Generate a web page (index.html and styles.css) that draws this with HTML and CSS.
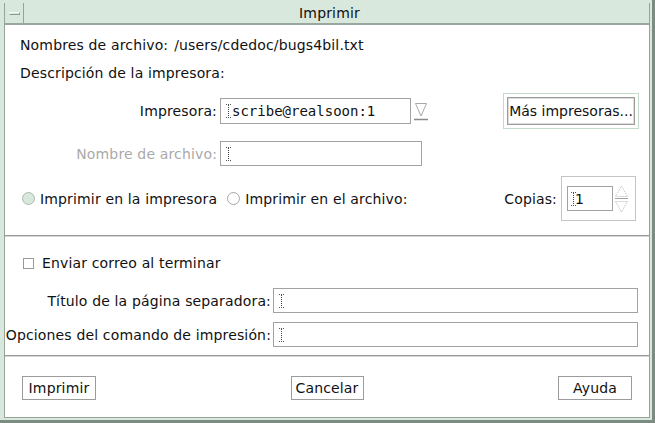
FILE: index.html
```html
<!DOCTYPE html>
<html lang="es">
<head>
<meta charset="utf-8">
<title>Imprimir</title>
<link rel="stylesheet" href="styles.css">
</head>
<body>
<div class="window">
  <div class="frame">
    <div class="titlebar">
      <div class="menu-btn"><span class="menu-bar"></span></div>
      <div class="title">Imprimir</div>
    </div>
    <div class="content">
      <section class="sec sec-top">
        <div class="info">Nombres de archivo:<span class="path">/users/cdedoc/bugs4bil.txt</span></div>
        <div class="info info-desc">Descripción de la impresora:</div>
        <div class="row row-printer">
          <span class="lbl lbl-a">Impresora:</span>
          <div class="field field-printer">
            <svg class="ibeam" width="5" height="14" viewBox="0 0 5 14"><path d="M0 0.5H5M0 13.5H5" stroke="#555" stroke-width="1" stroke-dasharray="1 1"/><path d="M2.5 1V13" stroke="#444" stroke-width="1" stroke-dasharray="1 1"/></svg>
            <span class="mono">scribe@realsoon:1</span>
          </div>
          <svg class="dropdown" width="16" height="22" viewBox="0 0 16 22"><path d="M2.5 3.5H13.5L8 16Z" fill="none" stroke="#a8a8a8" stroke-width="1"/><path d="M1 19.5H15" stroke="#8a8a8a" stroke-width="1.5"/></svg>
          <div class="spacer"></div>
          <div class="btn-frame"><button class="btn btn-more">Más impresoras...</button></div>
        </div>
        <div class="row row-file">
          <span class="lbl lbl-a disabled">Nombre de archivo:</span>
          <div class="field field-file">
            <svg class="ibeam" width="5" height="14" viewBox="0 0 5 14"><path d="M0 0.5H5M0 13.5H5" stroke="#555" stroke-width="1" stroke-dasharray="1 1"/><path d="M2.5 1V13" stroke="#444" stroke-width="1" stroke-dasharray="1 1"/></svg>
          </div>
        </div>
        <div class="row row-radio">
          <span class="radio radio-on"></span>
          <span class="radio-text">Imprimir en la impresora</span>
          <span class="radio"></span>
          <span class="radio-text">Imprimir en el archivo:</span>
          <div class="spacer"></div>
          <span class="copies-lbl">Copias:</span>
          <div class="copies-box">
            <div class="field field-copies">
              <svg class="ibeam" width="5" height="14" viewBox="0 0 5 14"><path d="M0 0.5H5M0 13.5H5" stroke="#555" stroke-width="1" stroke-dasharray="1 1"/><path d="M2.5 1V13" stroke="#444" stroke-width="1" stroke-dasharray="1 1"/></svg>
              <span class="copies-val">1</span>
            </div>
            <svg class="spinner" width="15" height="28" viewBox="0 0 15 28"><path d="M7.5 1L13.5 11.5H1.5Z" fill="none" stroke="#b8b8b8" stroke-width="1" stroke-dasharray="1 1"/><path d="M1 13.5H14" stroke="#a0a0a0" stroke-width="1"/><path d="M1.5 16.5H13.5L7.5 27Z" fill="none" stroke="#b8b8b8" stroke-width="1" stroke-dasharray="1 1"/></svg>
          </div>
        </div>
      </section>
      <div class="sep"></div>
      <section class="sec sec-mid">
        <div class="row row-check">
          <span class="check"></span>
          <span class="check-text">Enviar correo al terminar</span>
        </div>
        <div class="row row-field row-title">
          <span class="lbl lbl-b">Título de la página separadora:</span>
          <div class="field field-wide">
            <svg class="ibeam" width="5" height="14" viewBox="0 0 5 14"><path d="M0 0.5H5M0 13.5H5" stroke="#555" stroke-width="1" stroke-dasharray="1 1"/><path d="M2.5 1V13" stroke="#444" stroke-width="1" stroke-dasharray="1 1"/></svg>
          </div>
        </div>
        <div class="row row-field row-opts">
          <span class="lbl lbl-b">Opciones del comando de impresión:</span>
          <div class="field field-wide">
            <svg class="ibeam" width="5" height="14" viewBox="0 0 5 14"><path d="M0 0.5H5M0 13.5H5" stroke="#555" stroke-width="1" stroke-dasharray="1 1"/><path d="M2.5 1V13" stroke="#444" stroke-width="1" stroke-dasharray="1 1"/></svg>
          </div>
        </div>
      </section>
      <div class="sep"></div>
      <section class="sec sec-bottom">
        <button class="btn btn-act btn-print">Imprimir</button>
        <button class="btn btn-act btn-cancel">Cancelar</button>
        <button class="btn btn-act btn-help">Ayuda</button>
      </section>
    </div>
  </div>
</div>
</body>
</html>
```
FILE: styles.css
```css
* { box-sizing: border-box; }
html, body { margin: 0; padding: 0; }
body {
  width: 655px;
  height: 423px;
  overflow: hidden;
  font-family: "DejaVu Sans", "Liberation Sans", sans-serif;
  font-size: 14px;
  letter-spacing: 0.15px;
  color: #111;
  background: #d8e8dc;
}
.window {
  width: 655px;
  height: 423px;
  display: flex;
  flex-direction: column;
  background: #d8e8dc;
  padding: 3px 2px 2px 4px;
  border-right: 3px solid #7c8c82;
  border-bottom: 3px solid #7c8c82;
}
.frame {
  flex: 1;
  display: flex;
  flex-direction: column;
  border-left: 1px solid #97a49a;
  border-right: 1px solid #97a49a;
  border-bottom: 1px solid #97a49a;
}
.titlebar {
  height: 22px;
  display: flex;
  background: #d8e8dc;
  border-bottom: 2px solid #9aa69e;
}
.menu-btn {
  width: 19px;
  border-right: 1px solid #97a49a;
  display: flex;
  align-items: center;
  justify-content: center;
}
.menu-bar {
  width: 11px;
  height: 3px;
  border: 1px solid #8d9a91;
  border-top-color: #f2f8f3;
  border-left-color: #f2f8f3;
  margin-top: 1px;
}
.title {
  flex: 1;
  text-align: center;
  line-height: 20px;
  font-size: 14px;
  padding-right: 14px;
}
.content {
  flex: 1;
  background: #fff;
  display: flex;
  flex-direction: column;
}
.sec-top { padding: 10px 0 14px 0; }
.info {
  height: 20px;
  line-height: 20px;
  padding-left: 15px;
}
.info-desc { margin-top: 8px; }
.path { margin-left: 6px; }
.row { display: flex; align-items: center; }
.lbl { text-align: right; white-space: nowrap; }
.lbl-a { width: 212px; margin-right: 3px; }
.lbl-b { width: 266px; margin-right: 2px; }
.disabled { color: #a9a9a9; }
.field {
  display: flex;
  align-items: center;
  border: 1px solid #a2a2a2;
  background: #fff;
  padding-left: 5px;
}
.ibeam { flex: none; }
.mono {
  font-family: "DejaVu Sans Mono", "Liberation Mono", monospace;
  font-size: 14px;
  letter-spacing: 0;
  margin-left: 1px;
}
.row-printer { margin-top: 10px; height: 36px; }
.field-printer { width: 191px; height: 26px; }
.dropdown { margin-left: 2px; }
.spacer { flex: 1; }
.btn-frame {
  margin-right: 10px;
  border: 1px solid #c6dacb;
  padding: 3px;
  height: 36px;
  display: flex;
}
.btn {
  font-family: "DejaVu Sans", "Liberation Sans", sans-serif;
  font-size: 14px;
  letter-spacing: 0.15px;
  color: #111;
  background: #fff;
  border: 1px solid #9c9c9c;
  padding: 0;
  margin: 0;
}
.btn-more {
  width: 128px;
  height: 28px;
  letter-spacing: 0;
  box-shadow: inset 0 0 0 1px #dcdcdc;
}
.row-file { margin-top: 12px; height: 25px; }
.field-file { width: 202px; height: 25px; }
.row-radio { margin-top: 10px; height: 45px; padding-left: 17px; }
.radio {
  width: 13px;
  height: 13px;
  border-radius: 50%;
  border: 1px solid #a8a8a8;
  background: #fff;
  flex: none;
}
.radio-on { background: #d8e8dc; border-color: #b0b8b2; }
.radio-text { margin-left: 5px; margin-right: 10px; }
.copies-lbl { margin-right: 4px; }
.copies-box {
  width: 75px;
  height: 45px;
  border: 1px solid #c4c4c4;
  margin-right: 13px;
  display: flex;
  align-items: center;
  padding-left: 5px;
}
.field-copies { width: 46px; height: 25px; padding-left: 3px; }
.copies-val { margin-left: -1px; }
.spinner { margin-left: 1px; }
.sep {
  height: 2px;
  border-top: 1px solid #9a9a9a;
  border-bottom: 1px solid #d4d4d4;
  flex: none;
}
.sec-mid { padding: 16px 0 8px 0; }
.row-check { height: 20px; padding-left: 18px; }
.check {
  width: 11px;
  height: 11px;
  border: 1px solid #9a9a9a;
  flex: none;
}
.check-text { margin-left: 8px; }
.row-field { height: 25px; }
.row-title { margin-top: 15px; }
.row-opts { margin-top: 9px; }
.field-wide { width: 365px; height: 25px; }
.sec-bottom {
  flex: 1;
  display: flex;
  justify-content: space-between;
  align-items: flex-start;
  padding: 19px 17px 0 17px;
}
.btn-act { height: 24px; }
.btn-print { width: 74px; }
.btn-cancel { width: 73px; }
.btn-help { width: 74px; }
```
